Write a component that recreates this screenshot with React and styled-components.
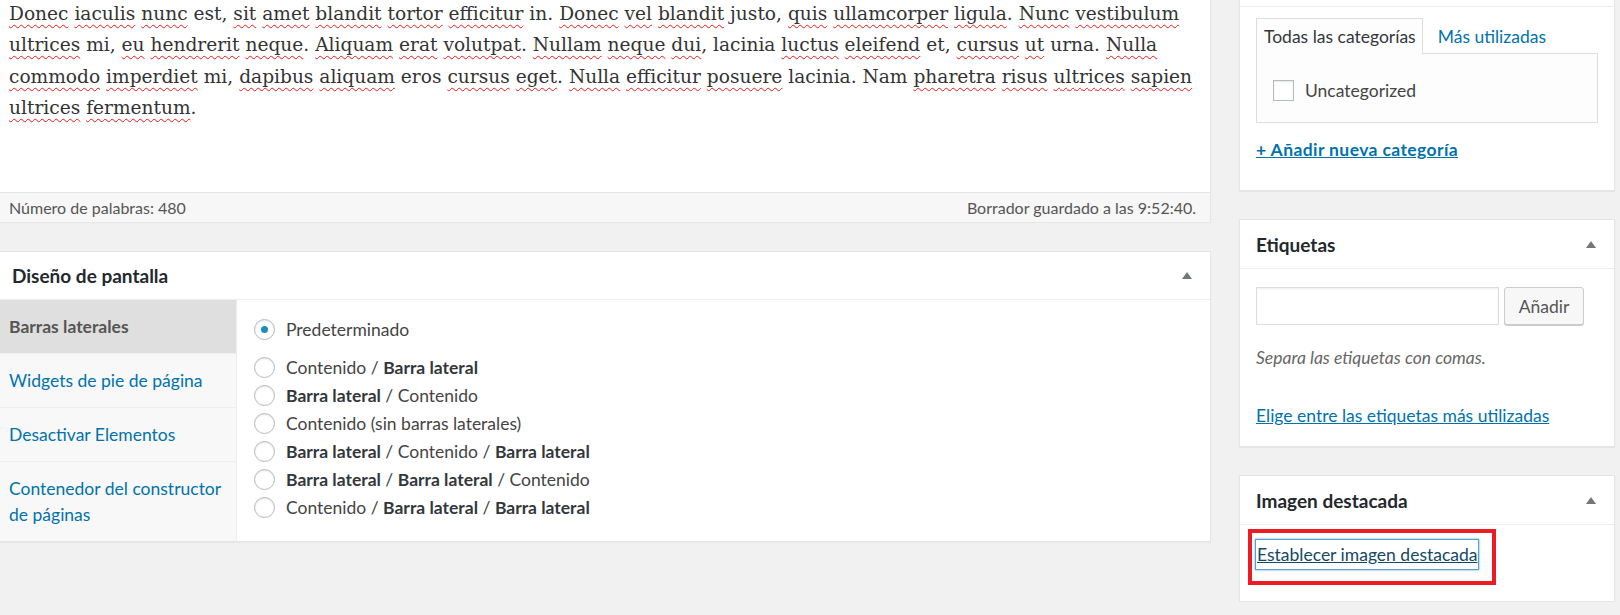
import { Fragment } from "react";
import styled, { createGlobalStyle } from "styled-components";

const GlobalStyle = createGlobalStyle`
  html, body {
    margin: 0;
    padding: 0;
  }
  body {
    background: #f1f1f1;
    font-family: Lato, "Noto Sans", sans-serif;
    font-size: 17.5px;
    color: #444;
    overflow: hidden;
  }
`;

const Page = styled.div`
  display: flex;
  align-items: flex-start;
  gap: 28px;
  width: 1615px;
`;

const MainColumn = styled.div`
  width: 1211px;
  display: flex;
  flex-direction: column;
  gap: 29px;
`;

const EditorBox = styled.div`
  background: #fff;
  border-right: 1px solid #e5e5e5;
  box-shadow: 0 1px 1px rgba(0, 0, 0, 0.04);
`;

const EditorBody = styled.div`
  height: 192px;
  box-sizing: border-box;
  padding: 0 14px 0 9px;
  overflow: hidden;
`;

const Prose = styled.p`
  margin: -2px 0 0;
  font-family: Georgia, "DejaVu Serif", serif;
  font-size: 18.6px;
  line-height: 31.3px;
  color: #333;
`;

const Typo = styled.span`
  text-decoration: underline wavy #e81818;
  text-decoration-thickness: 1px;
  text-decoration-skip-ink: none;
  text-underline-offset: 4px;
`;

const StatusBar = styled.div`
  height: 30px;
  box-sizing: border-box;
  border-top: 1px solid #e2e4e7;
  background: #f7f7f7;
  display: flex;
  align-items: center;
  justify-content: space-between;
  padding: 0 14px 0 9px;
  font-size: 16px;
  color: #555;
`;

const Postbox = styled.div`
  background: #fff;
  border: 1px solid #e5e5e5;
  box-shadow: 0 1px 1px rgba(0, 0, 0, 0.04);
`;

const LayoutBox = styled(Postbox)`
  border-left: 0;
`;

// the categories box continues from above the fold, only its header rule shows
const CategoriesBox = styled(Postbox)`
  border-top: 0;
`;

const HeaderEdge = styled.div`
  height: 6px;
  border-bottom: 1px solid #eee;
`;

const PostboxHeader = styled.div`
  height: ${(p) => p.$height || 48}px;
  box-sizing: border-box;
  display: flex;
  align-items: center;
  justify-content: space-between;
  padding: 0 18px 0 ${(p) => p.$indent || 16}px;
  border-bottom: 1px solid #eee;
  font-size: 19px;
  font-weight: 700;
  color: #23282d;
`;

const Toggle = styled.span`
  width: 0;
  height: 0;
  border-left: 5px solid transparent;
  border-right: 5px solid transparent;
  border-bottom: 7px solid #72777c;
`;

/* Diseño de pantalla */

const LayoutBody = styled.div`
  display: grid;
  grid-template-columns: 237px 1fr;
`;

const SectionTabs = styled.ul`
  margin: 0;
  padding: 0;
  list-style: none;
  background: #f8f8f8;
  border-right: 1px solid #eee;
`;

const SectionTab = styled.li`
  padding: 14px 9px 13px;
  line-height: 26px;
  border-bottom: 1px solid #eee;
  background: ${(p) => (p.$active ? "#dfdfdf" : "transparent")};
  color: ${(p) => (p.$active ? "#555" : "#0073aa")};
  font-weight: ${(p) => (p.$active ? 700 : 400)};
  &:last-child {
    border-bottom: 0;
  }
`;

const Options = styled.div`
  padding: 15px 17px;
`;

const OptionRow = styled.label`
  display: flex;
  align-items: center;
  gap: 11px;
  height: 28px;
  margin-bottom: ${(p) => (p.$spaced ? 10 : 0)}px;
  color: #444;
  b {
    font-weight: 700;
    color: #32373c;
  }
`;

const Radio = styled.span`
  position: relative;
  width: 21px;
  height: 21px;
  box-sizing: border-box;
  border-radius: 50%;
  border: 1px solid #b4b9be;
  background: #fff;
  box-shadow: inset 0 1px 2px rgba(0, 0, 0, 0.1);
  flex: none;
  &::before {
    content: "";
    display: ${(p) => (p.$checked ? "block" : "none")};
    position: absolute;
    left: 6px;
    top: 6px;
    width: 7px;
    height: 7px;
    border-radius: 50%;
    background: #1e8cbe;
  }
`;

/* Barra lateral */

const Sidebar = styled.div`
  width: 376px;
  display: flex;
  flex-direction: column;
  gap: 28px;
`;

const BoxBody = styled.div`
  display: flex;
  flex-direction: column;
  align-items: flex-start;
  padding: ${(p) => p.$pad || "18px 16px"};
`;

const Tabs = styled.div`
  display: flex;
  align-items: flex-end;
`;

const Tab = styled.div`
  height: 36px;
  box-sizing: border-box;
  display: flex;
  align-items: center;
  padding: 0 6px 0 7px;
  margin-left: ${(p) => (p.$active ? 0 : 7)}px;
  margin-bottom: -1px;
  border: 1px solid ${(p) => (p.$active ? "#ddd" : "transparent")};
  border-bottom: 0;
  background: ${(p) => (p.$active ? "#fdfdfd" : "transparent")};
  color: ${(p) => (p.$active ? "#32373c" : "#0073aa")};
  position: relative;
`;

const TabPanel = styled.div`
  align-self: stretch;
  height: 70px;
  box-sizing: border-box;
  border: 1px solid #ddd;
  background: #fdfdfd;
  display: flex;
  align-items: center;
  gap: 11px;
  padding: 5px 16px 0;
`;

const Checkbox = styled.span`
  width: 21px;
  height: 21px;
  box-sizing: border-box;
  border: 1px solid #b4b9be;
  background: #fff;
  box-shadow: inset 0 1px 2px rgba(0, 0, 0, 0.1);
`;

const Link = styled.a`
  display: block;
  margin-top: ${(p) => p.$gap || 0}px;
  color: #0073aa;
  text-decoration: underline;
  font-weight: ${(p) => (p.$strong ? 700 : 400)};
  letter-spacing: ${(p) => (p.$strong ? "0.4px" : "normal")};
  line-height: 24px;
  cursor: pointer;
`;

const AddRow = styled.div`
  display: flex;
  gap: 5px;
`;

const TagInput = styled.input`
  width: 243px;
  height: 38px;
  box-sizing: border-box;
  border: 1px solid #ddd;
  box-shadow: inset 0 1px 2px rgba(0, 0, 0, 0.07);
  background: #fff;
`;

const Button = styled.button`
  width: 80px;
  height: 38px;
  border: 1px solid #ccc;
  border-radius: 3px;
  background: #f7f7f7;
  box-shadow: 0 1px 0 #ccc;
  font-family: inherit;
  font-size: 17.5px;
  color: #555;
`;

const Hint = styled.p`
  margin: 21px 0 34px;
  line-height: 24px;
  font-style: italic;
  color: #666;
`;

const Highlight = styled.div`
  display: flex;
  margin-left: -8px;
  padding: 7px 14px 12px 4px;
  border: 4px solid #ec1c24;
`;

const FocusedLink = styled.a`
  display: block;
  height: 29px;
  line-height: 29px;
  padding: 0 1px;
  color: #124964;
  text-decoration: underline;
  box-shadow: 0 0 0 1px #5b9dd9, 0 0 2px 1px rgba(30, 140, 190, 0.8);
`;

const draft =
  "Donec iaculis nunc est, sit amet blandit tortor efficitur in. Donec vel blandit justo, quis ullamcorper ligula. Nunc vestibulum ultrices mi, eu hendrerit neque. Aliquam erat volutpat. Nullam neque dui, lacinia luctus eleifend et, cursus ut urna. Nulla commodo imperdiet mi, dapibus aliquam eros cursus eget. Nulla efficitur posuere lacinia. Nam pharetra risus ultrices sapien ultrices fermentum.";

// words the Spanish dictionary accepts
const known = new Set(["est", "in", "justo", "mi", "et", "urna", "eros", "lacinia", "Nam"]);

const layouts = [
  [["Contenido", false], [" / ", false], ["Barra lateral", true]],
  [["Barra lateral", true], [" / Contenido", false]],
  [["Contenido (sin barras laterales)", false]],
  [["Barra lateral", true], [" / Contenido / ", false], ["Barra lateral", true]],
  [["Barra lateral", true], [" / ", false], ["Barra lateral", true], [" / Contenido", false]],
  [["Contenido / ", false], ["Barra lateral", true], [" / ", false], ["Barra lateral", true]],
];

function DraftText() {
  const words = draft.split(" ");
  return (
    <Prose>
      {words.map((w, i) => {
        const [, word, punct] = w.match(/^(.*?)([.,]?)$/);
        return (
          <Fragment key={i}>
            {known.has(word) ? word : <Typo>{word}</Typo>}
            {punct}
            {i < words.length - 1 ? " " : ""}
          </Fragment>
        );
      })}
    </Prose>
  );
}

export default function App() {
  return (
    <>
      <GlobalStyle />
      <Page>
        <MainColumn>
          <EditorBox>
            <EditorBody>
              <DraftText />
            </EditorBody>
            <StatusBar>
              <span>Número de palabras: 480</span>
              <span>Borrador guardado a las 9:52:40.</span>
            </StatusBar>
          </EditorBox>

          <LayoutBox>
            <PostboxHeader $indent={12}>
              Diseño de pantalla
              <Toggle />
            </PostboxHeader>
            <LayoutBody>
              <SectionTabs>
                <SectionTab $active>Barras laterales</SectionTab>
                <SectionTab>Widgets de pie de página</SectionTab>
                <SectionTab>Desactivar Elementos</SectionTab>
                <SectionTab>
                  Contenedor del constructor
                  <br />
                  de páginas
                </SectionTab>
              </SectionTabs>
              <Options>
                <OptionRow $spaced>
                  <Radio $checked />
                  Predeterminado
                </OptionRow>
                {layouts.map((parts, i) => (
                  <OptionRow key={i}>
                    <Radio />
                    <span>
                      {parts.map(([t, bold], j) => (bold ? <b key={j}>{t}</b> : <Fragment key={j}>{t}</Fragment>))}
                    </span>
                  </OptionRow>
                ))}
              </Options>
            </LayoutBody>
          </LayoutBox>
        </MainColumn>

        <Sidebar>
          <CategoriesBox>
            <HeaderEdge />
            <BoxBody $pad="11px 16px 28px">
              <Tabs>
                <Tab $active>Todas las categorías</Tab>
                <Tab>Más utilizadas</Tab>
              </Tabs>
              <TabPanel>
                <Checkbox />
                Uncategorized
              </TabPanel>
              <Link $strong $gap={15}>
                + Añadir nueva categoría
              </Link>
            </BoxBody>
          </CategoriesBox>

          <Postbox>
            <PostboxHeader $height={49}>
              Etiquetas
              <Toggle />
            </PostboxHeader>
            <BoxBody $pad="18px 16px 18px">
              <AddRow>
                <TagInput />
                <Button>Añadir</Button>
              </AddRow>
              <Hint>Separa las etiquetas con comas.</Hint>
              <Link>Elige entre las etiquetas más utilizadas</Link>
            </BoxBody>
          </Postbox>

          <Postbox>
            <PostboxHeader $height={49}>
              Imagen destacada
              <Toggle />
            </PostboxHeader>
            <BoxBody $pad="4px 16px 16px">
              <Highlight>
                <FocusedLink>Establecer imagen destacada</FocusedLink>
              </Highlight>
            </BoxBody>
          </Postbox>
        </Sidebar>
      </Page>
    </>
  );
}
